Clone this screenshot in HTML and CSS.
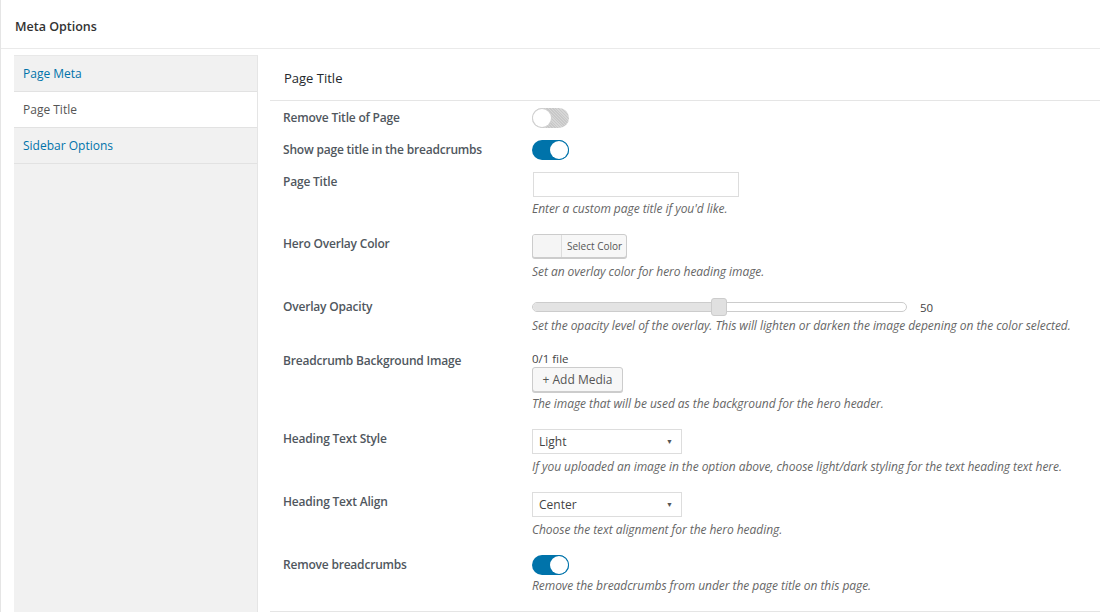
FILE: index.html
```html
<!DOCTYPE html>
<html>
<head>
<meta charset="utf-8">
<link rel="stylesheet" href="styles.css">
</head>
<body>
<div class="metabox">
  <div class="mb-header">Meta Options</div>
  <div class="mb-body">
    <ul class="tabs">
      <li class="tab">Page Meta</li>
      <li class="tab active">Page Title</li>
      <li class="tab">Sidebar Options</li>
    </ul>
    <div class="panel">
      <div class="panel-title">Page Title</div>
      <div class="rows">
        <div class="row">
          <div class="label">Remove Title of Page</div>
          <div class="field"><span class="toggle"><span class="knob"></span></span></div>
        </div>
        <div class="row">
          <div class="label">Show page title in the breadcrumbs</div>
          <div class="field"><span class="toggle on"><span class="knob"></span></span></div>
        </div>
        <div class="row desc-row">
          <div class="label">Page Title</div>
          <div class="field">
            <div class="text-input"></div>
            <p class="desc desc-input">Enter a custom page title if you'd like.</p>
          </div>
        </div>
        <div class="row desc-row">
          <div class="label">Hero Overlay Color</div>
          <div class="field">
            <div class="color-btn"><span class="swatch"></span><span class="color-label">Select Color</span></div>
            <p class="desc desc-btn">Set an overlay color for hero heading image.</p>
          </div>
        </div>
        <div class="row desc-row">
          <div class="label">Overlay Opacity</div>
          <div class="field">
            <div class="slider-line">
              <div class="slider"><span class="fill"></span><span class="thumb"></span></div>
              <span class="slider-val">50</span>
            </div>
            <p class="desc desc-slider">Set the opacity level of the overlay. This will lighten or darken the image depening on the color selected.</p>
          </div>
        </div>
        <div class="row desc-row">
          <div class="label">Breadcrumb Background Image</div>
          <div class="field">
            <div class="file-count">0/1 file</div>
            <div class="media-btn">+ Add Media</div>
            <p class="desc desc-media">The image that will be used as the background for the hero header.</p>
          </div>
        </div>
        <div class="row desc-row">
          <div class="label">Heading Text Style</div>
          <div class="field">
            <div class="select"><span>Light</span><span class="arrow">▼</span></div>
            <p class="desc">If you uploaded an image in the option above, choose light/dark styling for the text heading text here.</p>
          </div>
        </div>
        <div class="row desc-row">
          <div class="label">Heading Text Align</div>
          <div class="field">
            <div class="select"><span>Center</span><span class="arrow">▼</span></div>
            <p class="desc">Choose the text alignment for the hero heading.</p>
          </div>
        </div>
        <div class="row desc-row">
          <div class="label">Remove breadcrumbs</div>
          <div class="field">
            <span class="toggle on"><span class="knob"></span></span>
            <p class="desc desc-toggle">Remove the breadcrumbs from under the page title on this page.</p>
          </div>
        </div>
      </div>
    </div>
  </div>
</div>
</body>
</html>
```
FILE: styles.css
```css
* { box-sizing: border-box; }
html, body { margin: 0; padding: 0; background: #fff; }
body {
  font-family: "Open Sans", "Noto Sans", sans-serif;
  color: #444;
  width: 1100px;
  height: 612px;
  overflow: hidden;
}
.metabox {
  height: 612px;
  border-left: 1px solid #e5e5e5;
  display: flex;
  flex-direction: column;
}
.mb-header {
  height: 49px;
  padding: 17px 14px 0;
  font-size: 12.5px;
  font-weight: 600;
  line-height: 20px;
  color: #333;
  border-bottom: 1px solid #eaeaea;
  flex: none;
}
.mb-body {
  flex: 1;
  display: flex;
  padding: 6px 0 0 13px;
  min-height: 0;
}
.tabs {
  list-style: none;
  margin: 0;
  padding: 0;
  width: 244px;
  flex: none;
  background: #f1f1f1;
  border-right: 1px solid #e5e5e5;
  border-top: 1px solid #e8e8e8;
}
.tab {
  height: 36px;
  padding: 1px 9px 0;
  line-height: 34px;
  font-size: 12px;
  color: #0073aa;
  border-bottom: 1px solid #e2e2e2;
}
.tab.active {
  background: #fff;
  color: #555;
}
.panel {
  flex: 1;
  margin-left: 12px;
  display: flex;
  flex-direction: column;
  border-bottom: 1px solid #e5e5e5;
}
.panel-title {
  height: 46px;
  padding: 13px 0 0 14px;
  font-size: 13px;
  font-weight: 500;
  line-height: 20px;
  color: #23282d;
  border-bottom: 1px solid #e5e5e5;
  flex: none;
}
.rows {
  flex: 1;
  padding: 1px 0 0 13px;
}
.row {
  display: flex;
  padding: 6px 0 6px;
}
.row.desc-row { padding-bottom: 10px; }
.label {
  width: 249px;
  flex: none;
  font-size: 12px;
  font-weight: 600;
  letter-spacing: -0.2px;
  line-height: 20px;
  color: #50575e;
}
.field { flex: 1; }
.desc {
  margin: 4px 0 0;
  font-size: 12px;
  font-style: italic;
  letter-spacing: -0.05px;
  line-height: 18px;
  color: #666;
}
.desc-input { margin-top: 3px; }
.desc-btn { margin-top: 5px; }
.desc-slider { margin-top: 0; }
.desc-media { margin-top: 3px; }
.desc-toggle { margin-top: 2px; }

.toggle {
  display: block;
  position: relative;
  width: 37px;
  height: 20px;
  border-radius: 10px;
  background: #cfcfcf;
  background-image: repeating-linear-gradient(45deg, #c8c8c8 0 1px, #d6d6d6 1px 2px);
}
.toggle .knob {
  position: absolute;
  top: 1px;
  left: 1px;
  width: 18px;
  height: 18px;
  border-radius: 50%;
  background: #fff;
  box-shadow: 0 0 0 1px #d0d0d0;
}
.toggle.on {
  background: #0073aa;
  background-image: none;
}
.toggle.on .knob {
  left: 18px;
  box-shadow: 0 0 0 1px #0073aa;
}

.text-input {
  width: 206px;
  height: 25px;
  margin-left: 1px;
  border: 1px solid #ddd;
  background: #fff;
}

.color-btn {
  display: flex;
  width: fit-content;
  height: 24px;
  border: 1px solid #ccc;
  border-radius: 3px;
  background: #f7f7f7;
  box-shadow: 0 1px 0 #ccc;
  overflow: hidden;
}
.swatch {
  width: 29px;
  border-right: 1px solid #ddd;
  background: #f5f5f5;
}
.color-label {
  padding: 0 4px 0 5px;
  font-size: 10px;
  line-height: 22px;
  color: #555;
}

.slider-line {
  display: flex;
  align-items: center;
  height: 20px;
}
.slider {
  position: relative;
  width: 375px;
  height: 10px;
  border: 1px solid #ccc;
  border-radius: 5px;
  background: #fff;
}
.slider .fill {
  position: absolute;
  left: 0;
  top: 0;
  bottom: 0;
  width: 186px;
  background: #e3e3e3;
  border-radius: 4px 0 0 4px;
}
.slider .thumb {
  position: absolute;
  left: 178px;
  top: -5px;
  width: 16px;
  height: 18px;
  border: 1px solid #ccc;
  border-radius: 3px;
  background: #e0e0e0;
}
.slider-val {
  margin-left: 13px;
  font-size: 11.5px;
  color: #444;
}

.file-count {
  font-size: 11.5px;
  line-height: 16px;
  color: #444;
}
.media-btn {
  width: 91px;
  height: 25px;
  border: 1px solid #ccc;
  border-radius: 3px;
  background: #f7f7f7;
  box-shadow: 0 1px 0 #ccc;
  font-size: 12px;
  line-height: 23px;
  text-align: center;
  color: #555;
}

.select {
  display: flex;
  justify-content: space-between;
  align-items: center;
  width: 150px;
  height: 25px;
  padding: 0 6px 0 6px;
  border: 1px solid #ddd;
  font-size: 12px;
  color: #444;
  background: #fff;
}
.select .arrow {
  font-size: 7px;
  color: #555;
  margin-right: 2px;
}
```
